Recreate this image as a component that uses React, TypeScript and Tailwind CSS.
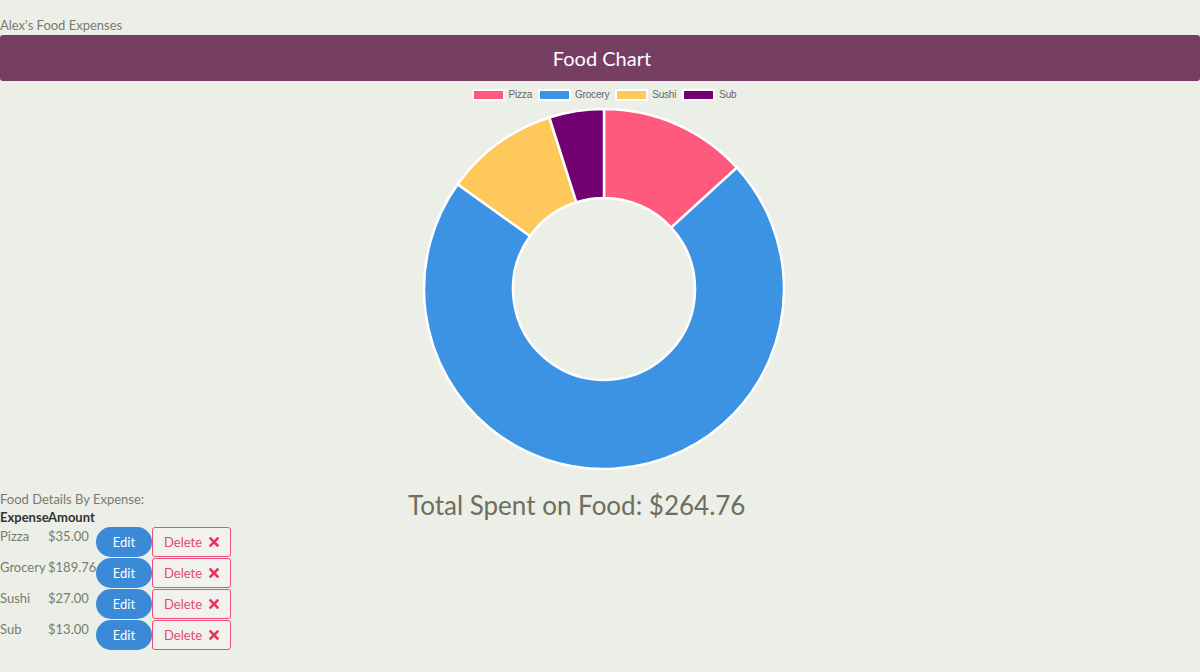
import React from 'react';

const expenses = [
  { name: 'Pizza', amount: 35, color: '#ff5a7e' },
  { name: 'Grocery', amount: 189.76, color: '#3d93e3' },
  { name: 'Sushi', amount: 27, color: '#fec85a' },
  { name: 'Sub', amount: 13, color: '#730070' },
];

function arcPath(cx: number, cy: number, r1: number, r2: number, a0: number, a1: number) {
  const p = (r: number, a: number) => [cx + r * Math.cos(a), cy + r * Math.sin(a)];
  const large = a1 - a0 > Math.PI ? 1 : 0;
  const [x0, y0] = p(r2, a0);
  const [x1, y1] = p(r2, a1);
  const [x2, y2] = p(r1, a1);
  const [x3, y3] = p(r1, a0);
  return `M${x0} ${y0} A${r2} ${r2} 0 ${large} 1 ${x1} ${y1} L${x2} ${y2} A${r1} ${r1} 0 ${large} 0 ${x3} ${y3} Z`;
}

function Donut() {
  const total = expenses.reduce((s, e) => s + e.amount, 0);
  let start = -Math.PI / 2;
  return (
    <svg width="364" height="364" viewBox="0 0 364 364">
      {expenses.map((e) => {
        const end = start + (e.amount / total) * Math.PI * 2;
        const d = arcPath(182, 182, 91, 180, start, end);
        start = end;
        return <path key={e.name} d={d} fill={e.color} stroke="#ffffff" strokeWidth={2.5} strokeLinejoin="round" />;
      })}
    </svg>
  );
}

function XMark() {
  return (
    <svg width="10" height="10" viewBox="0 0 10 10">
      <path d="M1.5 1.5 L8.5 8.5 M8.5 1.5 L1.5 8.5" stroke="#e8365d" strokeWidth="2.6" strokeLinecap="square" />
    </svg>
  );
}

export default function App() {
  const total = expenses.reduce((s, e) => s + e.amount, 0);

  return (
    <div className="w-[1200px] h-[672px] bg-[#eceee8] overflow-hidden font-['Lato','Noto_Sans',sans-serif]">
      <div className="pt-[15px] text-[13px] leading-[20px] text-[#7b7b6c]">Alex's Food Expenses</div>

      {/* Header bar */}
      <div className="h-[46px] bg-[#753e62] rounded-[3px] flex items-center justify-center">
        <span className="text-white text-[20px] pl-1">Food Chart</span>
      </div>

      {/* Chart */}
      <div className="pl-2 flex flex-col items-center">
        <div className="flex items-center h-[26px] pt-[1px] font-['Liberation_Sans',Arial,sans-serif] text-[10px] text-[#666666]">
          {expenses.map((e) => (
            <div key={e.name} className="flex items-center mr-[6px] last:mr-0">
              <span className="w-[33px] h-[12px] border-[2.5px] border-white" style={{ backgroundColor: e.color }} />
              <span className="ml-[4px] tracking-[-0.2px]">{e.name}</span>
            </div>
          ))}
        </div>
        <Donut />
      </div>

      {/* Details + total */}
      <div className="flex items-start mt-[18px]">
        <div className="w-[232px] pt-[1px] text-[13px] leading-[18px]">
          <div className="text-[#7b7b6c]">Food Details By Expense:</div>
          <div className="flex font-bold text-[#333333]">
            <span className="w-[48px]">Expense</span>
            <span>Amount</span>
          </div>
          <div className="mt-[1px]">
            {expenses.map((e) => (
              <div key={e.name} className="flex items-start h-[31px] text-[#7b7b6c]">
                <span className="w-[48px]">{e.name}</span>
                <span className="w-[48px] whitespace-nowrap">${e.amount.toFixed(2)}</span>
                <button className="w-[56px] h-[30px] rounded-[15px] bg-[#3a8ad8] text-white text-[13px]">Edit</button>
                <button className="w-[79px] h-[30px] rounded-[3px] border border-[#ee4f78] bg-[#f1f2ee] text-[#e8476f] text-[13px] flex items-center justify-center gap-[7px]">
                  Delete <XMark />
                </button>
              </div>
            ))}
          </div>
        </div>
        <div className="ml-[176px] text-[26px] leading-[32px] text-[#6e6e5c]">
          Total Spent on Food: ${total.toFixed(2)}
        </div>
      </div>
    </div>
  );
}
